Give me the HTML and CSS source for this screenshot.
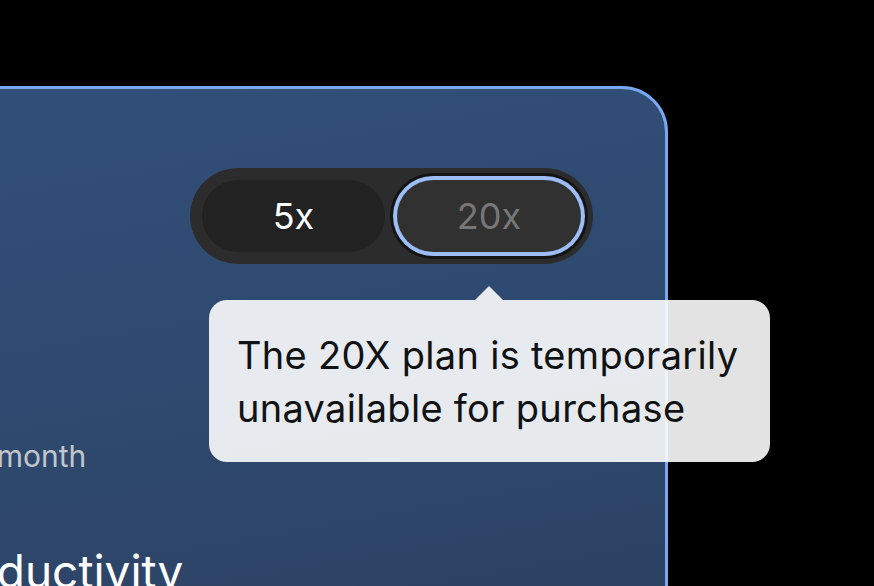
FILE: index.html
```html
<!DOCTYPE html>
<html lang="en">
<head>
<meta charset="utf-8">
<title>Plan picker</title>
<link rel="stylesheet" href="styles.css">
</head>
<body>
<main class="stage">
  <section class="card">
    <div class="card-top">
      <div class="toggle-wrap">
        <div class="toggle">
          <button class="opt opt-active" type="button">5x</button>
          <button class="opt opt-disabled" type="button">20x</button>
        </div>
        <div class="tooltip">The 20X plan is temporarily unavailable for purchase</div>
      </div>
    </div>
    <div class="price-row"><span class="price">$100</span><span class="per">/month</span></div>
    <h3 class="tagline">Max productivity</h3>
  </section>
</main>
</body>
</html>
```
FILE: styles.css
```css
* { box-sizing: border-box; }
html, body { margin: 0; height: 100%; }
body {
  background: #000;
  font-family: Inter, "Noto Sans", sans-serif;
  overflow: hidden;
}
.stage {
  display: flex;
  flex-direction: column;
  padding-top: 86px;
}
.card {
  margin-left: -221px;
  width: 889px;
  height: 700px;
  border: 3px solid #7aa8f0;
  border-radius: 46px;
  background: linear-gradient(170deg, #32507a 0%, #2e486d 50%, #2a3d5b 100%);
  padding: 79px 72px 0 60px;
  display: flex;
  flex-direction: column;
}
.card-top {
  display: flex;
  justify-content: flex-end;
}
.toggle-wrap { position: relative; }
.toggle {
  display: flex;
  gap: 12px;
  padding: 12px;
  background: #2c2c2c;
  border-radius: 48px;
}
.opt {
  width: 183px;
  height: 72px;
  border: 0;
  border-radius: 36px;
  font-family: Inter, "Noto Sans", sans-serif;
  font-size: 36px;
  padding: 0;
}
.opt-active { background: #222222; color: #ffffff; }
.opt-disabled {
  width: 184px;
  background: #313131;
  color: #777777;
  box-shadow: 0 0 0 4px #9dbdf6, 0 0 0 7px #141414;
}
.tooltip {
  position: absolute;
  left: 19px;
  top: 132px;
  width: 561px;
  height: 162px;
  padding: 29px 20px 0 28px;
  border-radius: 18px;
  background: rgba(252, 252, 252, 0.9);
  color: #111214;
  font-size: 38px;
  line-height: 53px;
  letter-spacing: 0.3px;
}
.tooltip::before {
  content: "";
  position: absolute;
  left: 266px;
  top: -14px;
  width: 28px;
  height: 14px;
  clip-path: polygon(50% 0, 100% 100%, 0 100%);
  background: rgba(252, 252, 252, 0.9);
}
.price-row {
  margin-top: 155px;
  display: flex;
  align-items: baseline;
  gap: 10px;
}
.price { color: #fff; font-size: 56px; line-height: 1; font-weight: 600; }
.per { color: #c2c6cc; font-size: 30px; }
.tagline {
  margin: 73px 0 0 -23px;
  color: #fff;
  font-size: 46px;
  line-height: 1;
  font-weight: 400;
}
```
